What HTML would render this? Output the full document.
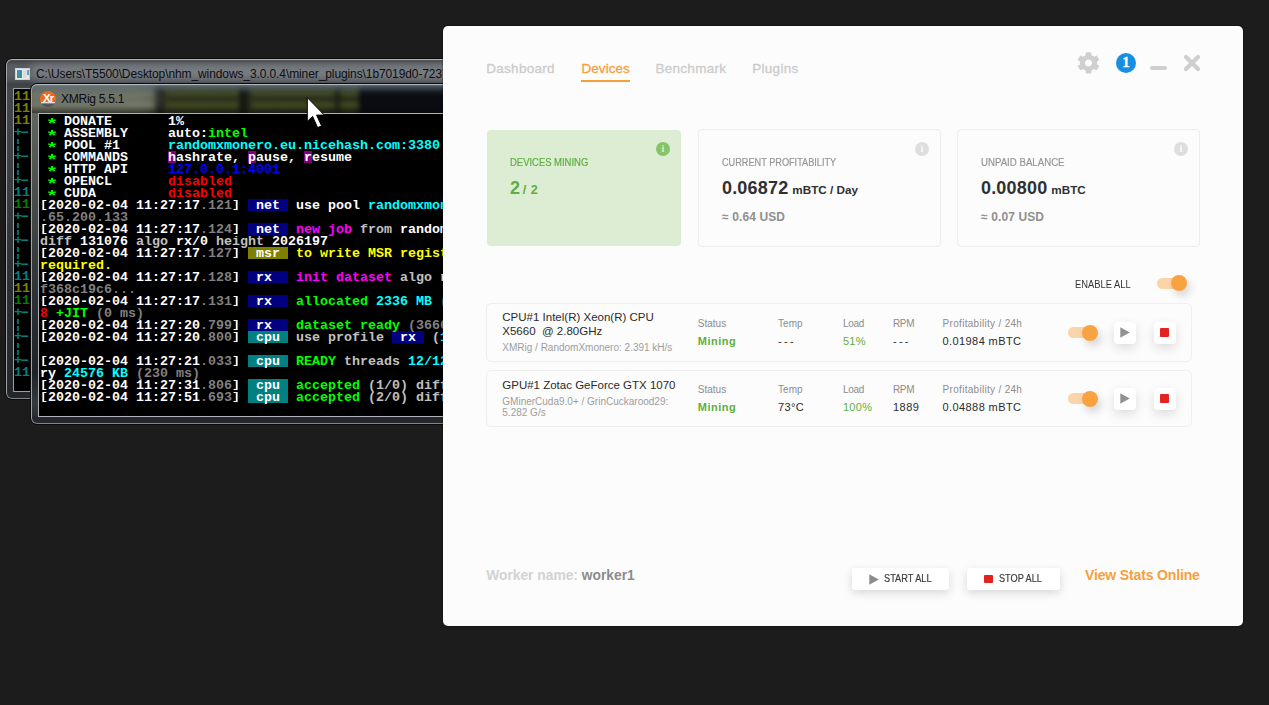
<!DOCTYPE html>
<html><head><meta charset="utf-8"><title>NiceHash Miner</title>
<style>
*{box-sizing:border-box;margin:0;padding:0}
html,body{width:1269px;height:705px;overflow:hidden;background:#1c1c1c;font-family:"Liberation Sans",sans-serif}
.abs{position:absolute}
/* ---------- console windows ---------- */
.win{position:absolute;border-radius:7px;border:1px solid #0a0a0a;overflow:hidden}
.win:after{content:"";position:absolute;left:0;top:0;right:0;bottom:0;border:1px solid #b4b8bc;border-bottom-color:#80858a;border-left-color:#a0a4a8;border-radius:6px;pointer-events:none}
#w1{left:5px;top:58px;width:500px;height:342px;background:linear-gradient(#4a4e53 0,#474b50 3px,#565a5f 6px,#5a5e63 10px,#585c61 17px,#4e5257 22px,#3d4045 25px,#44484c 30px,#3a3e42 120px,#2a2e32 230px,#23272b 100%)}
#w1 .glow{position:absolute;left:24px;top:5px;width:480px;height:16px;background:#9ea3a8;opacity:.45;filter:blur(4px);border-radius:8px}
#w1 .title{position:absolute;left:30px;top:7px;letter-spacing:-0.1px;font-size:12px;line-height:16px;color:#0c0c10;white-space:nowrap}
#w1 .client{position:absolute;left:7px;top:29px;width:500px;height:304px;background:#000;border:1px solid #9a9ea3}
#w2{left:30px;top:83px;width:500px;height:342px;background:#0d0f14}
#w2 .glass{position:absolute;left:0;top:0;width:500px;height:29px;overflow:hidden;background:linear-gradient(90deg,#3a3d30 0,#34382a 100px,#2a2d1e 126px,#22261a 324px,#0a0c11 332px)}
#w2 .glass i{position:absolute;height:8px;background:#3e4521;filter:blur(2.8px)}
#w2 .glass b{position:absolute;top:-4px;height:40px;width:7px;background:#15170f;filter:blur(2.5px)}
#w2 .glass u{position:absolute;left:-10px;top:2px;width:138px;height:26px;background:#a9adac;opacity:.46;filter:blur(7px);border-radius:12px}
#w2 .shade{position:absolute;left:0;top:0;right:0;height:29px;background:linear-gradient(rgba(130,146,160,.8) 0,rgba(110,126,140,.55) 3px,rgba(80,95,110,.18) 8px,rgba(0,0,0,0) 12px,rgba(0,0,0,.0) 22px,rgba(0,0,0,.25) 29px)}
#w2 .side{position:absolute;left:0;top:29px;width:8px;bottom:0;background:linear-gradient(#62655c 0,#4c4f4c 70px,#2c3034 190px,#1c2226 260px,#343a40 290px,#24282c 100%)}
#w2 .bot{position:absolute;left:0;right:0;bottom:0;height:8px;background:#24282c}
#w2 .title{position:absolute;left:30px;top:7px;letter-spacing:-0.25px;font-size:12px;line-height:16px;color:#0a0a14;white-space:nowrap}
#w2 .client{position:absolute;left:7px;top:29px;width:500px;height:304px;background:#000;border:1px solid #b0b4b8}
pre.con{position:absolute;font-family:"Liberation Mono",monospace;font-weight:bold;font-size:13.333px;line-height:12px;color:#c0c0c0;white-space:pre;letter-spacing:0}
.w{color:#fff}.g{color:#808080}.gr{color:#00ff00}.cy{color:#00ffff}.mg{color:#ff00ff}.ye{color:#ffff00}.rd{color:#ff0000}.bl{color:#0000ff}
.tb,.ty,.tc,.tm{color:#fff}
.bg{position:absolute;height:12px;width:40px}
.ast{display:inline-block;width:8px;height:12px;vertical-align:top;position:relative;color:#00ff00}
.ast b{position:absolute;left:-2.3px;top:4.1px;font-size:21px;line-height:12px;font-weight:bold;transform:scaleY(.72);transform-origin:50% 25%}
.k{display:inline-block;transform:scaleY(.78);transform-origin:50% 3.4px}
.d{display:inline-block;font-style:normal;transform:scaleX(1.8);transform-origin:70% 50%}
.ol{color:#808000}.te{color:#008080}.dg{color:#008000}
/* ---------- app ---------- */
#app{position:absolute;left:443px;top:26px;width:800px;height:600px;background:#fcfcfc;border-radius:5px;color:#333;box-shadow:0 0 2px rgba(0,0,0,.7)}
.t{position:absolute;white-space:nowrap}
.tab{position:absolute;top:34.1px;font-size:13.5px;line-height:18px;color:#cbcbcb;white-space:nowrap;-webkit-text-stroke:.3px #cbcbcb;letter-spacing:.27px}
.tab.on{color:#f5a03c;-webkit-text-stroke-color:#f5a03c}
.card{position:absolute;top:103px;height:118px;border:1px solid #ededed;border-radius:4px;background:#fcfcfc}
.card .lbl{position:absolute;left:23px;top:25.9px;transform-origin:0 50%;font-size:10px;line-height:14px;color:#969696;white-space:nowrap;-webkit-text-stroke:.2px #969696}
.card .val{position:absolute;left:23px;top:45.66px;font-size:18px;line-height:24px;font-weight:bold;color:#303030;white-space:nowrap;letter-spacing:.18px}
.card .val small{letter-spacing:0}
.card .val small{font-size:11.7px}
.card .sub{letter-spacing:.12px;position:absolute;left:23px;top:78.74px;font-size:12px;line-height:16px;font-weight:bold;color:#8f8f8f;white-space:nowrap}
.info{position:absolute;width:14px;height:14px;border-radius:50%;background:#dedede;color:#fcfcfc;font-family:"Liberation Serif",serif;font-weight:bold;font-size:10px;line-height:13.5px;text-align:center}
.row{position:absolute;left:43px;width:706px;border:1px solid #efefef;border-radius:5px}
.row .nm{position:absolute;left:15.3px;font-size:11.5px;line-height:13.8px;color:#2b2b2b;white-space:nowrap}
.row .al{position:absolute;left:15.3px;font-size:10px;color:#9c9c9c;white-space:nowrap}
.row .h{position:absolute;font-size:10px;line-height:13px;color:#8c8c8c;white-space:nowrap}
.row .v{position:absolute;font-size:11px;line-height:15px;color:#2b2b2b;white-space:nowrap;letter-spacing:.4px}
.row .v.gn{color:#5fae3f}
.row .v.b{font-weight:bold}
.tog{position:absolute;width:28px;height:11px;border-radius:5.5px;background:#fbd4aa}
.tog i{position:absolute;left:13.5px;top:-2.5px;width:16px;height:16px;border-radius:50%;background:#f8a342;box-shadow:3px 5px 9px rgba(0,0,0,.16)}
.sq{position:absolute;width:22px;height:22px;border-radius:4px;background:#fff;box-shadow:0 4px 11px rgba(0,0,0,.13)}
.btn{position:absolute;top:542px;height:22px;border-radius:3px;background:#fff;box-shadow:0 3px 10px rgba(0,0,0,.15);font-size:10px;line-height:22px;color:#3c3c3c;white-space:nowrap;-webkit-text-stroke:.2px #3c3c3c}
.btn span{transform-origin:0 50%}
</style></head><body>

<!-- back console window -->
<div class="win" id="w1">
  <div class="client"></div>
  <svg class="abs" style="left:9px;top:9px" width="15" height="12" viewBox="0 0 15 12"><defs><linearGradient id="ig" x1="0" y1="0" x2="0" y2="1"><stop offset="0" stop-color="#4f86c6"/><stop offset=".45" stop-color="#3f8fa0"/><stop offset="1" stop-color="#3a9a62"/></linearGradient></defs><rect width="15" height="12" fill="#e9ecef"/><rect x="0.5" y="0.5" width="14" height="11" fill="none" stroke="#cfd4d9"/><rect x="2" y="2" width="5" height="8" fill="url(#ig)"/><rect x="8" y="2" width="3" height="8" fill="#d9dde1"/><rect x="12" y="2" width="2" height="5" fill="url(#ig)" opacity=".8"/></svg>
  <div class="glow"></div><div class="title">C:\Users\T5500\Desktop\nhm_windows_3.0.0.4\miner_plugins\1b7019d0-7237</div>
<pre class="con" style="left:8px;top:31.5px"><span class="ol">11
11
11</span>
<span class="te">+<i class="d">-</i>
&brvbar;
+<i class="d">-</i>
&brvbar;
+<i class="d">-</i>
11</span>
<span class="dg">11</span>
<span class="te">+<i class="d">-</i>
&brvbar;
+<i class="d">-</i>
&brvbar;
+<i class="d">-</i>
11</span>
<span class="ol">11</span>
<span class="dg">11</span>
<span class="te">+<i class="d">-</i>
&brvbar;
+<i class="d">-</i>
&brvbar;
+<i class="d">-</i>
11</span></pre>
</div>

<!-- front console window -->
<div class="win" id="w2">
  <div class="glass"><i style="left:-4px;top:5px;width:128px;background:#50553a"></i><i style="left:-4px;top:17px;width:128px;background:#50553a"></i><i style="left:135px;top:5px;width:74px"></i><i style="left:135px;top:17px;width:74px"></i><i style="left:220px;top:5px;width:107px"></i><i style="left:220px;top:17px;width:107px"></i><b style="left:125px"></b><b style="left:209px"></b><b style="left:304px;width:5px;opacity:.8"></b><u></u></div><div class="shade"></div><div class="side"></div><div class="bot"></div>
  <div class="client"></div>
  <svg class="abs" style="left:8px;top:6px" width="18" height="18" viewBox="0 0 18 18"><path d="M1.83 12.6 A8 8 0 1 1 16.17 12.6 Z" fill="#f06a1c"/><path d="M1.83 12.6 A8 8 0 0 0 16.17 12.6 Z" fill="#555"/><rect x="2" y="12.2" width="14" height="1.1" fill="#fff"/><text x="9.2" y="12.4" text-anchor="middle" font-family="Liberation Sans,sans-serif" font-weight="bold" font-size="11.5" fill="#fff" letter-spacing="-0.8">Xr</text></svg>
  <div class="title">XMRig 5.5.1</div>
<div class="bg" style="left:137px;top:67px;width:8px;background:#800080"></div><div class="bg" style="left:217px;top:67px;width:8px;background:#800080"></div><div class="bg" style="left:273px;top:67px;width:8px;background:#800080"></div><div class="bg" style="left:217px;top:115px;width:40px;background:#000080"></div><div class="bg" style="left:217px;top:139px;width:40px;background:#000080"></div><div class="bg" style="left:217px;top:163px;width:40px;background:#808000"></div><div class="bg" style="left:217px;top:187px;width:40px;background:#000080"></div><div class="bg" style="left:217px;top:211px;width:40px;background:#000080"></div><div class="bg" style="left:217px;top:235px;width:40px;background:#000080"></div><div class="bg" style="left:217px;top:247px;width:40px;background:#008080"></div><div class="bg" style="left:361px;top:247px;width:32px;background:#000080"></div><div class="bg" style="left:217px;top:271px;width:40px;background:#008080"></div><div class="bg" style="left:217px;top:295px;width:40px;background:#008080"></div><div class="bg" style="left:217px;top:307px;width:40px;background:#008080"></div>
<pre class="con" style="left:9px;top:31.5px"> <span class="ast"><b>*</b></span> <span class="w">DONATE       1%</span>
 <span class="ast"><b>*</b></span> <span class="w">ASSEMBLY     auto:</span><span class="gr">intel</span>
 <span class="ast"><b>*</b></span> <span class="w">POOL #1      </span><span class="cy">randomxmonero.eu.nicehash.com:3380</span>
 <span class="ast"><b>*</b></span> <span class="w">COMMANDS     </span><span class="tm">h</span><span class="w">ashrate, </span><span class="tm">p</span><span class="w">ause, </span><span class="tm">r</span><span class="w">esume</span>
 <span class="ast"><b>*</b></span> <span class="w">HTTP API     </span><span class="bl">127.0.0.1:4001</span>
 <span class="ast"><b>*</b></span> <span class="w">OPENCL       </span><span class="rd">disabled</span>
 <span class="ast"><b>*</b></span> <span class="w">CUDA         </span><span class="rd">disabled</span>
<span class="w"><span class="k">[</span>2020-02-04 11:27:17</span><span class="g">.121</span><span class="w"><span class="k">]</span></span> <span class="tb"> net </span> <span class="w">use pool </span><span class="cy">randomxmone</span>
<span class="g">.65.200.133</span>
<span class="w"><span class="k">[</span>2020-02-04 11:27:17</span><span class="g">.124</span><span class="w"><span class="k">]</span></span> <span class="tb"> net </span> <span class="mg">new job</span> from <span class="w">randomx</span>
diff <span class="w">131076</span> algo <span class="w">rx/0</span> height <span class="w">2026197</span>
<span class="w"><span class="k">[</span>2020-02-04 11:27:17</span><span class="g">.127</span><span class="w"><span class="k">]</span></span> <span class="ty"> msr </span> <span class="ye">to write MSR registe</span>
<span class="ye">required.</span>
<span class="w"><span class="k">[</span>2020-02-04 11:27:17</span><span class="g">.128</span><span class="w"><span class="k">]</span></span> <span class="tb"> rx  </span> <span class="mg">init dataset</span> algo <span class="w">rx</span>
<span class="g">f368c19c6...</span>
<span class="w"><span class="k">[</span>2020-02-04 11:27:17</span><span class="g">.131</span><span class="w"><span class="k">]</span></span> <span class="tb"> rx  </span> <span class="gr">allocated</span> <span class="cy">2336 MB</span> <span class="g">(2</span>
<span class="rd">8</span> <span class="gr">+JIT</span> <span class="g">(0 ms)</span>
<span class="w"><span class="k">[</span>2020-02-04 11:27:20</span><span class="g">.799</span><span class="w"><span class="k">]</span></span> <span class="tb"> rx  </span> <span class="gr">dataset ready</span> <span class="g">(3666</span>
<span class="w"><span class="k">[</span>2020-02-04 11:27:20</span><span class="g">.800</span><span class="w"><span class="k">]</span></span> <span class="tc"> cpu </span> use profile <span class="tb"> rx </span> (<span class="cy">12</span>

<span class="w"><span class="k">[</span>2020-02-04 11:27:21</span><span class="g">.033</span><span class="w"><span class="k">]</span></span> <span class="tc"> cpu </span> <span class="gr">READY</span> threads <span class="cy">12/12</span>
<span class="w">ry </span><span class="cy">24576 KB</span> <span class="g">(230 ms)</span>
<span class="w"><span class="k">[</span>2020-02-04 11:27:31</span><span class="g">.806</span><span class="w"><span class="k">]</span></span> <span class="tc"> cpu </span> <span class="gr">accepted</span> (1/0) diff
<span class="w"><span class="k">[</span>2020-02-04 11:27:51</span><span class="g">.693</span><span class="w"><span class="k">]</span></span> <span class="tc"> cpu </span> <span class="gr">accepted</span> (2/0) diff</pre>
</div>

<!-- mouse cursor -->
<svg class="abs" style="left:305px;top:96px" width="24" height="36" viewBox="0 0 24 36"><path d="M2.3 1.6 L2.3 25.4 L7.6 20.4 L12.6 31.6 L16.6 30 L11.6 19.1 L19.3 19.1 Z" fill="#fff" stroke="#000" stroke-width="1" stroke-linejoin="miter"/></svg>

<!-- app window -->
<div id="app">
  <div class="tab" style="left:43.3px">Dashboard</div>
  <div class="tab on" style="left:138.5px;letter-spacing:.05px">Devices</div>
  <div class="abs" style="left:138px;top:54px;width:49px;height:2px;background:#f5a03c"></div>
  <div class="tab" style="left:212.5px">Benchmark</div>
  <div class="tab" style="left:309.3px">Plugins</div>

  <!-- top right icons -->
  <svg class="abs" style="left:634px;top:26px" width="23" height="21.8" viewBox="0 0 512 512" preserveAspectRatio="none"><path fill="#cfcfcf" d="M487.4 315.7l-42.600-24.600c4.300-23.200 4.300-47 0-70.200l42.600-24.600c4.900-2.800 7.100-8.600 5.500-14-11.100-35.600-30-67.800-54.700-94.600-3.800-4.100-10-5.100-14.800-2.300L380.800 110c-17.900-15.400-38.500-27.300-60.800-35.100V25.800c0-5.600-3.900-10.500-9.400-11.700-36.700-8.200-74.300-7.800-109.200 0-5.500 1.200-9.400 6.100-9.400 11.700V75c-22.200 7.900-42.800 19.800-60.800 35.100L88.700 85.500c-4.900-2.800-11-1.900-14.800 2.300-24.700 26.700-43.600 58.900-54.700 94.600-1.700 5.400.6 11.200 5.500 14L67.300 221c-4.300 23.200-4.300 47 0 70.200l-42.600 24.600c-4.900 2.800-7.100 8.600-5.500 14 11.100 35.600 30 67.800 54.700 94.600 3.800 4.100 10 5.100 14.800 2.300l42.600-24.600c17.900 15.400 38.500 27.300 60.800 35.100v49.200c0 5.600 3.900 10.500 9.400 11.700 36.700 8.200 74.300 7.800 109.200 0 5.500-1.200 9.400-6.100 9.400-11.700v-49.200c22.200-7.900 42.800-19.800 60.800-35.100l42.600 24.600c4.900 2.800 11 1.900 14.800-2.300 24.700-26.700 43.600-58.900 54.700-94.600 1.500-5.500-.7-11.300-5.600-14.100zM256 336c-44.100 0-80-35.900-80-80s35.900-80 80-80 80 35.900 80 80-35.900 80-80 80z"/></svg>
  <div class="abs" style="left:673px;top:27px;width:20px;height:20px;border-radius:50%;background:#178ee2;color:#fff;font-family:'Liberation Serif',serif;font-weight:bold;font-size:15px;line-height:19.5px;text-align:center;-webkit-text-stroke:.3px #fff">1</div>
  <div class="abs" style="left:707.3px;top:40px;width:16.6px;height:4px;border-radius:2px;background:#cfcfcf"></div>
  <svg class="abs" style="left:739px;top:27px" width="20" height="20" viewBox="0 0 20 20"><path d="M4 4 L16 16 M16 4 L4 16" stroke="#cfcfcf" stroke-width="4.3" stroke-linecap="round" fill="none"/></svg>

  <!-- cards -->
  <div class="card" style="left:44px;top:104px;width:194px;height:116px;background:#dcedd3;border:0">
    <div class="lbl" style="color:#5fae3f;-webkit-text-stroke-color:#5fae3f;transform:scaleX(.945)">DEVICES MINING</div>
    <div class="val" style="color:#5fae3f">2<small style="margin-left:2.5px;letter-spacing:.5px;font-size:12.6px">/ 2</small></div>
    <div class="info" style="left:168.8px;top:11.5px;background:#86c46a;color:#dcedd3">i</div>
  </div>
  <div class="card" style="left:255px;width:243px">
    <div class="lbl" style="transform:scaleX(.916)">CURRENT PROFITABILITY</div>
    <div class="val">0.06872<small style="margin-left:4px">mBTC / Day</small></div>
    <div class="sub">&asymp; 0.64 USD</div>
    <div class="info" style="left:216px;top:12px">i</div>
  </div>
  <div class="card" style="left:514px;width:243px">
    <div class="lbl" style="transform:scaleX(.966)">UNPAID BALANCE</div>
    <div class="val">0.00800<small style="margin-left:4px">mBTC</small></div>
    <div class="sub">&asymp; 0.07 USD</div>
    <div class="info" style="left:216px;top:12px">i</div>
  </div>

  <div class="t" style="left:631.8px;top:250.54px;font-size:10px;line-height:14px;color:#333;transform:scaleX(.937);transform-origin:0 50%;margin-top:1px">ENABLE ALL</div>
  <div class="tog" style="left:714.4px;top:251.5px"><i></i></div>

  <!-- device rows -->
<div class="row" style="top:277px;height:59px">
<div class="nm" style="top:7.02px">CPU#1 Intel(R) Xeon(R) CPU<br>X5660&nbsp; @ 2.80GHz</div>
<div class="al" style="top:38.44px;line-height:12px">XMRig / RandomXmonero: 2.391 kH/s</div>
<div class="h" style="left:210.8px;top:12.94px;letter-spacing:0px">Status</div><div class="v gn b" style="left:210.8px;top:29.79px;letter-spacing:0.5px">Mining</div>
<div class="h" style="left:291.1px;top:12.94px;letter-spacing:0px">Temp</div><div class="v" style="left:291.1px;top:29.79px;letter-spacing:-0.4px">- - -</div>
<div class="h" style="left:355.9px;top:12.94px;letter-spacing:-0.25px">Load</div><div class="v gn" style="left:355.9px;top:29.79px;letter-spacing:0.3px">51%</div>
<div class="h" style="left:406.0px;top:12.94px;letter-spacing:-0.35px">RPM</div><div class="v" style="left:406.0px;top:29.79px;letter-spacing:-0.4px">- - -</div>
<div class="h" style="left:455.6px;top:12.94px;letter-spacing:0.3px">Profitability / 24h</div><div class="v" style="left:455.6px;top:29.79px;letter-spacing:0.4px">0.01984 mBTC</div>
<div class="tog" style="left:581px;top:23.0px"><i></i></div>
<div class="sq" style="left:627px;top:17.5px"><svg class="abs" style="left:6px;top:5.7px" width="10" height="11" viewBox="0 0 10 11"><path d="M0.3 0.2 L9.8 5.5 L0.3 10.8 Z" fill="#929292"/></svg></div>
<div class="sq" style="left:666.7px;top:17.5px"><div class="abs" style="left:6.5px;top:6.5px;width:9px;height:9px;background:#e52222;border-radius:1px"></div></div>
</div>
<div class="row" style="top:344px;height:57px">
<div class="nm" style="top:7.8px">GPU#1 Zotac GeForce GTX 1070</div>
<div class="al" style="top:24.63px;line-height:11.6px">GMinerCuda9.0+ / GrinCuckarood29:<br>5.282 G/s</div>
<div class="h" style="left:210.8px;top:11.74px;letter-spacing:0px">Status</div><div class="v gn b" style="left:210.8px;top:28.59px;letter-spacing:0.5px">Mining</div>
<div class="h" style="left:291.1px;top:11.74px;letter-spacing:0px">Temp</div><div class="v" style="left:291.1px;top:28.59px;letter-spacing:0.3px">73&deg;C</div>
<div class="h" style="left:355.9px;top:11.74px;letter-spacing:-0.25px">Load</div><div class="v gn" style="left:355.9px;top:28.59px;letter-spacing:0.35px">100%</div>
<div class="h" style="left:406.0px;top:11.74px;letter-spacing:-0.35px">RPM</div><div class="v" style="left:406.0px;top:28.59px;letter-spacing:0.5px">1889</div>
<div class="h" style="left:455.6px;top:11.74px;letter-spacing:0.3px">Profitability / 24h</div><div class="v" style="left:455.6px;top:28.59px;letter-spacing:0.4px">0.04888 mBTC</div>
<div class="tog" style="left:581px;top:22.0px"><i></i></div>
<div class="sq" style="left:627px;top:16.5px"><svg class="abs" style="left:6px;top:5.7px" width="10" height="11" viewBox="0 0 10 11"><path d="M0.3 0.2 L9.8 5.5 L0.3 10.8 Z" fill="#929292"/></svg></div>
<div class="sq" style="left:666.7px;top:16.5px"><div class="abs" style="left:6.5px;top:6.5px;width:9px;height:9px;background:#e52222;border-radius:1px"></div></div>
</div>

  <!-- footer -->
  <div class="t" style="left:43.2px;top:540.6px;font-size:13.8px;line-height:18px;font-weight:bold;color:#d2d2d2">Worker name: <span style="color:#8c8c8c">worker1</span></div>
  <div class="btn" style="left:409px;width:97px"><svg class="abs" style="left:17px;top:5.5px" width="10" height="11" viewBox="0 0 10 11"><path d="M0.3 0.2 L9.8 5.5 L0.3 10.8 Z" fill="#8c8c8c"/></svg><span class="abs" style="left:32px;top:-.3px;transform:scaleX(.92)">START ALL</span></div>
  <div class="btn" style="left:524.2px;width:93px"><div class="abs" style="left:17px;top:6.5px;width:9px;height:8.5px;background:#e52222;border-radius:1px"></div><span class="abs" style="left:31.5px;top:-.3px;transform:scaleX(.915)">STOP ALL</span></div>
  <div class="t" style="left:642px;top:540.15px;font-size:14px;line-height:18px;font-weight:bold;color:#f5a03c;letter-spacing:-.15px">View Stats Online</div>
</div>
</body></html>
